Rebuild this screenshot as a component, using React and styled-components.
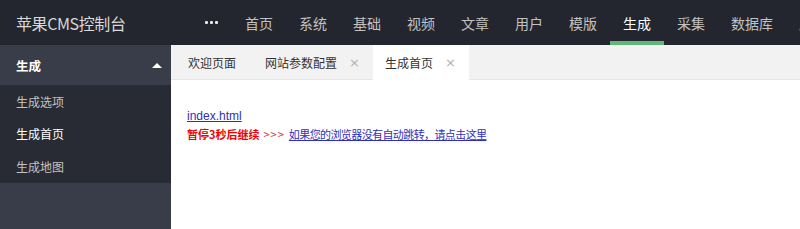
import React from 'react';
import styled, { createGlobalStyle } from 'styled-components';

const GlobalStyle = createGlobalStyle`
  html, body {
    margin: 0;
    padding: 0;
    width: 800px;
    height: 229px;
    overflow: hidden;
    background: #fff;
  }
  body {
    font-family: "Liberation Sans", "Noto Sans CJK SC", sans-serif;
  }
`;

const Page = styled.div`
  width: 800px;
  height: 229px;
  display: flex;
  flex-direction: column;
  overflow: hidden;
`;

const Header = styled.div`
  height: 45px;
  flex-shrink: 0;
  background: #23262e;
  display: flex;
  align-items: stretch;
  overflow: hidden;
`;

const Logo = styled.div`
  width: 189px;
  flex-shrink: 0;
  padding-left: 16px;
  box-sizing: border-box;
  display: flex;
  align-items: center;
  color: #d9d9d9;
  font-size: 16px;
  font-family: "Noto Sans CJK SC", sans-serif;
  letter-spacing: -0.4px;
`;

const Nav = styled.ul`
  list-style: none;
  margin: 0;
  padding: 0;
  display: flex;
  white-space: nowrap;
`;

const NavItem = styled.li`
  position: relative;
  padding: 0 13px;
  display: flex;
  align-items: center;
  font-size: 14px;
  font-family: "Noto Sans CJK SC", sans-serif;
  color: ${p => (p.$active ? '#fff' : '#c2c2c2')};
  &::after {
    content: '';
    display: ${p => (p.$active ? 'block' : 'none')};
    position: absolute;
    left: 0;
    right: 0;
    bottom: 0;
    height: 4px;
    background: #5fb878;
  }
`;

const More = styled.span`
  display: flex;
  gap: 2px;
  padding: 0 14px 0 16px;
  align-items: center;
  i {
    width: 3px;
    height: 3px;
    background: #e8e8e8;
    border-radius: 1px;
  }
`;

const Body = styled.div`
  flex: 1;
  display: flex;
  min-height: 0;
`;

const Side = styled.div`
  width: 171px;
  flex-shrink: 0;
  background: #393d49;
  font-family: "Noto Sans CJK SC", sans-serif;
`;

const SideTitle = styled.div`
  height: 40px;
  display: flex;
  align-items: center;
  justify-content: space-between;
  padding: 0 9px 0 16px;
  color: #fff;
  font-size: 12.5px;
  font-weight: bold;
`;

const Caret = styled.span`
  width: 0;
  height: 0;
  border-left: 5px solid transparent;
  border-right: 5px solid transparent;
  border-bottom: 5px solid #fff;
`;

const SubList = styled.div`
  background: #282b33;
`;

const SubItem = styled.div`
  height: 32.5px;
  display: flex;
  align-items: center;
  padding-left: 16px;
  font-size: 12px;
  color: ${p => (p.$active ? '#fff' : '#c2c2c2')};
`;

const Main = styled.div`
  flex: 1;
  display: flex;
  flex-direction: column;
  min-width: 0;
  background: #fff;
`;

const TabBar = styled.div`
  height: 34px;
  flex-shrink: 0;
  background: #f2f2f2;
  border-bottom: 1px solid #e6e6e6;
  display: flex;
  font-family: "Noto Sans CJK SC", sans-serif;
`;

const Tab = styled.div`
  display: flex;
  align-items: center;
  gap: 12px;
  padding: ${p => (p.$closable ? '0 13px 0 12px' : '0 17px')};
  font-size: 12px;
  color: #333;
  background: ${p => (p.$active ? '#fff' : 'transparent')};
  margin-bottom: ${p => (p.$active ? '-1px' : '0')};
`;

const Close = styled.span`
  font-size: 13px;
  color: #b0b0b0;
  font-family: "DejaVu Sans", sans-serif;
  line-height: 1;
`;

const Content = styled.div`
  padding: 27px 16px 0;
  font-size: 12px;
  line-height: 18px;
`;

const Link = styled.a`
  color: #2f2fbd;
  text-decoration: underline;
  font-family: "Liberation Sans", "Noto Sans CJK SC", sans-serif;
  letter-spacing: ${p => p.$tight ? '-0.6px' : '0'};
`;

const Line = styled.div`
  display: flex;
  align-items: baseline;
  gap: 4px;
  font-size: 11px;
  font-family: "Noto Sans CJK SC", sans-serif;
`;

const Warn = styled.b`
  color: #ee0000;
`;

const Arrows = styled.span`
  color: #c33;
  letter-spacing: 1px;
`;

const navs = ['首页', '系统', '基础', '视频', '文章', '用户', '模版', '生成', '采集', '数据库', '应用'];

export default function App() {
  return (
    <Page>
      <GlobalStyle />
      <Header>
        <Logo>苹果CMS控制台</Logo>
        <More><i /><i /><i /></More>
        <Nav>
          {navs.map(n => (
            <NavItem key={n} $active={n === '生成'}>{n}</NavItem>
          ))}
        </Nav>
      </Header>
      <Body>
        <Side>
          <SideTitle>生成<Caret /></SideTitle>
          <SubList>
            <SubItem>生成选项</SubItem>
            <SubItem $active>生成首页</SubItem>
            <SubItem>生成地图</SubItem>
          </SubList>
        </Side>
        <Main>
          <TabBar>
            <Tab>欢迎页面</Tab>
            <Tab $closable>网站参数配置<Close>×</Close></Tab>
            <Tab $closable $active>生成首页<Close>×</Close></Tab>
          </TabBar>
          <Content>
            <Link href="#">index.html</Link>
            <Line>
              <Warn>暂停3秒后继续</Warn>
              <Arrows>&gt;&gt;&gt;</Arrows>
              <Link href="#" $tight>如果您的浏览器没有自动跳转，请点击这里</Link>
            </Line>
          </Content>
        </Main>
      </Body>
    </Page>
  );
}
